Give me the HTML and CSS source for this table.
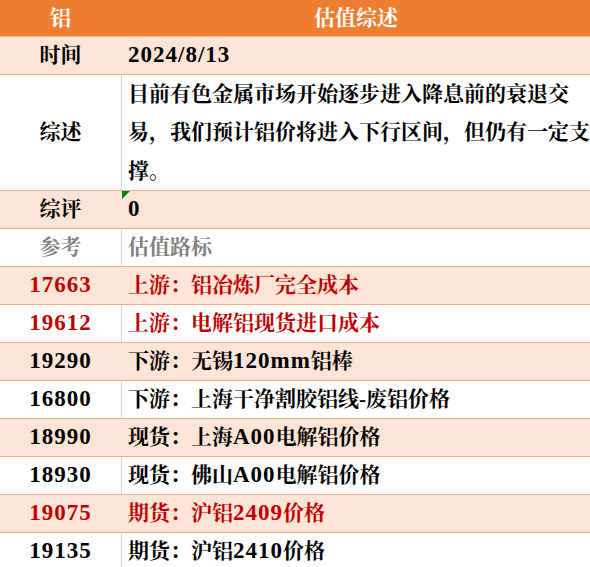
FILE: index.html
```html
<!DOCTYPE html>
<html lang="zh-CN">
<head>
<meta charset="utf-8">
<title>铝 估值综述</title>
<link rel="stylesheet" href="styles.css">
</head>
<body>
<div class="sheet">
  <div class="row head">
    <div class="c1">铝</div>
    <div class="c2 center">估值综述</div>
  </div>
  <div class="row fill">
    <div class="c1">时间</div>
    <div class="c2"><span class="num">2024/8/13</span></div>
  </div>
  <div class="row plain tall">
    <div class="c1">综述</div>
    <div class="c2 para">目前有色金属市场开始逐步进入降息前的衰退交<br>易，我们预计铝价将进入下行区间，但仍有一定支<br>撑。</div>
  </div>
  <div class="row fill">
    <div class="c1">综评</div>
    <div class="c2 flag"><span class="num">0</span><span class="tri"></span></div>
  </div>
  <div class="row plain grey">
    <div class="c1">参考</div>
    <div class="c2">估值路标</div>
  </div>
  <div class="row fill red">
    <div class="c1"><span class="num">17663</span></div>
    <div class="c2">上游：铝冶炼厂完全成本</div>
  </div>
  <div class="row plain red">
    <div class="c1"><span class="num">19612</span></div>
    <div class="c2">上游：电解铝现货进口成本</div>
  </div>
  <div class="row fill">
    <div class="c1"><span class="num">19290</span></div>
    <div class="c2">下游：无锡<span class="num">120mm</span>铝棒</div>
  </div>
  <div class="row plain">
    <div class="c1"><span class="num">16800</span></div>
    <div class="c2">下游：上海干净割胶铝线-废铝价格</div>
  </div>
  <div class="row fill">
    <div class="c1"><span class="num">18990</span></div>
    <div class="c2">现货：上海<span class="num">A00</span>电解铝价格</div>
  </div>
  <div class="row plain">
    <div class="c1"><span class="num">18930</span></div>
    <div class="c2">现货：佛山<span class="num">A00</span>电解铝价格</div>
  </div>
  <div class="row fill red">
    <div class="c1"><span class="num">19075</span></div>
    <div class="c2">期货：沪铝<span class="num">2409</span>价格</div>
  </div>
  <div class="row plain last">
    <div class="c1"><span class="num">19135</span></div>
    <div class="c2">期货：沪铝<span class="num">2410</span>价格</div>
  </div>
</div>
</body>
</html>
```
FILE: styles.css
```css
* { box-sizing: border-box; }
html, body { margin: 0; padding: 0; background: #ffffff; }
body {
  font-family: "Liberation Serif", "Noto Serif CJK SC", "Source Han Serif SC", "Noto Sans CJK SC", serif;
  font-weight: 700;
  font-size: 21px;
  color: #000000;
}
.sheet { width: 590px; }
.row {
  display: flex;
  height: 38px;
  border-bottom: 1px solid #F4B084;
  line-height: 37px;
}
.row.head {
  height: 37px;
  background: #ED7D31;
  color: #ffffff;
  line-height: 36px;
}
.row.fill { background: #FCE4D6; }
.row.plain { background: #ffffff; }
.row.tall { height: 116px; line-height: 38.3px; }
.row.last { border-bottom: none; }
.row.red { color: #C00000; }
.row.grey { color: #808080; }
.c1 {
  width: 121px;
  flex: none;
  text-align: center;
}
.row.tall .c1 { line-height: 115px; }
.c2 {
  flex: 1;
  padding-left: 6px;
  white-space: nowrap;
  border-left: 1px solid transparent;
}
.row.plain .c2 { border-left-color: #D4D4D4; }
.c2.center { text-align: center; padding-left: 0; }
.num { font-size: 23px; letter-spacing: 1px; line-height: 1; }
.flag { position: relative; }
.tri {
  position: absolute;
  left: 0;
  top: 0;
  width: 0;
  height: 0;
  border-top: 8px solid #008000;
  border-right: 8px solid transparent;
}
```
